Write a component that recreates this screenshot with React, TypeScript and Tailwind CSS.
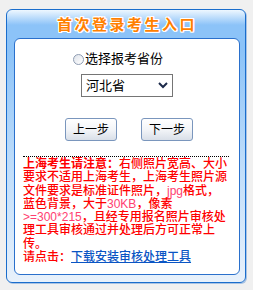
export default function App() {
  const font = { fontFamily: '"Liberation Sans", "Noto Sans CJK SC", sans-serif' };

  return (
    <div className="min-h-[290px] w-[253px] bg-[#f0f0f0] pt-[9px] pl-[6px]" style={font}>
      <div className="flex h-[274px] w-[240px] flex-col rounded-[6px] border border-[#1a6dcc] bg-[linear-gradient(to_bottom,#eef7ff_0px,#8cc3f8_15px,#8cc3f8_40px,#bddcfa_150px,#e8f1fb_100%)] shadow-[1px_1px_0_#a9c3e3]">
        {/* 标题 */}
        <div className="flex h-[28px] items-center justify-center pl-[2px]">
          <span className="text-[15px] font-bold leading-none tracking-[2.5px] text-[#ff8000] [text-shadow:1px_0_#fff,-1px_0_#fff,0_1px_#fff,0_-1px_#fff,1px_1px_#fff,-1px_-1px_#fff,1px_-1px_#fff,-1px_1px_#fff]">
            首次登录考生入口
          </span>
        </div>

        <div className="flex-1 pl-[7px] pr-[5px] pb-[7px]">
          <div className="flex h-full flex-col rounded-[6px] border border-[#2a70cc] bg-white">
            {/* 选择省份 */}
            <div className="mt-[13px] flex h-[14px] items-center pl-[58px]">
              <span className="mr-[1px] h-[11px] w-[11px] rounded-full border border-[#8e9cb2] bg-[linear-gradient(135deg,#dfe3ea,#ffffff)]" />
              <span className="text-[13px] leading-[14px] text-black">选择报考省份</span>
            </div>

            <div className="mt-[8px] flex justify-center">
              <div className="flex h-[23px] w-[92px] items-center justify-between border border-[#757575] bg-white pl-[4px] pr-[4px]">
                <span className="text-[13px] leading-none text-black">河北省</span>
                <svg width="10" height="7" viewBox="0 0 10 7">
                  <polyline points="1,1 5,5 9,1" fill="none" stroke="#1c2a4a" strokeWidth="2" />
                </svg>
              </div>
            </div>

            {/* 按钮 */}
            <div className="mt-[21px] flex justify-center gap-[24px] pl-[4px]">
              <button className="h-[23px] w-[52px] rounded-[3px] border border-[#7a96bd] bg-[linear-gradient(to_bottom,#ffffff,#f3f5f8_50%,#d9dfe8)] text-[12px] leading-none text-black">
                上一步
              </button>
              <button className="h-[23px] w-[52px] rounded-[3px] border border-[#7a96bd] bg-[linear-gradient(to_bottom,#ffffff,#f3f5f8_50%,#d9dfe8)] text-[12px] leading-none text-black">
                下一步
              </button>
            </div>

            {/* 说明 */}
            <div className="ml-[8px] mt-[15px] w-[206px] border-t border-dotted border-black pt-[1px] text-[12px] font-medium leading-[13.3px] text-[#ff0000] whitespace-nowrap">
              <b>上海考生请注意：</b>右侧照片宽高、大小
              <br />
              要求不适用上海考生，上海考生照片源
              <br />
              文件要求是标准证件照片，<span className="text-[#ff4070]">jpg</span>格式，
              <br />
              蓝色背景，大于<span className="text-[#ff4070]">30KB</span>，像素
              <br />
              <span className="text-[#ff4070]">&gt;=300*215</span>，且经专用报名照片审核处
              <br />
              理工具审核通过并处理后方可正常上
              <br />
              传。
              <br />
              请点击：
              <a href="#" className="text-[#0a55c4] underline">
                下载安装审核处理工具
              </a>
            </div>
          </div>
        </div>
      </div>
    </div>
  );
}
